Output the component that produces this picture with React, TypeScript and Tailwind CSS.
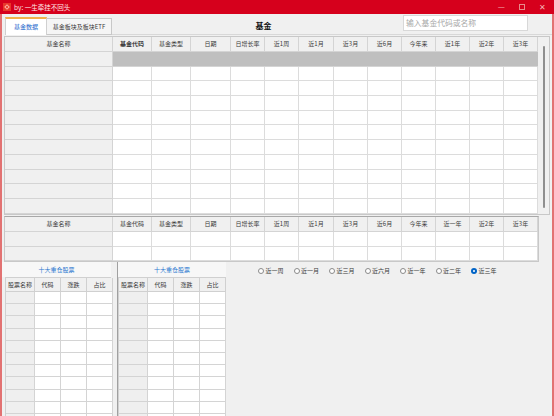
import React from "react";

const mainCols =
  "grid grid-cols-[108px_39px_39px_40px_34px_34px_35px_34px_34px_34px_34px_34px_34px]";
const stockCols = "grid grid-cols-[29px_26px_26px_26px]";

const mainHead = ["基金名称", "基金代码", "基金类型", "日期", "日增长率", "近1周", "近1月", "近3月", "近6月", "今年来", "近1年", "近2年", "近3年"];
const subHead = ["基金名称", "基金代码", "基金类型", "日期", "日增长率", "近1周", "近1月", "近3月", "近6月", "今年来", "近一年", "近2年", "近3年"];
const stockHead = ["股票名称", "代码", "涨跌", "占比"];
const periods = ["近一周", "近一月", "近三月", "近六月", "近一年", "近二年", "近三年"];

const HeadRow = ({ labels, bold }: { labels: string[]; bold?: boolean }) => (
  <div className={`${mainCols} h-[15px]`}>
    {labels.map((l, i) => (
      <div
        key={l + i}
        className={`flex items-center justify-center border-r border-b border-[#d4d4d4] bg-[#f0f0f0] text-[#3a3a3a] ${
          bold && i === 1 ? "font-bold" : ""
        }`}
      >
        {l}
      </div>
    ))}
  </div>
);

const DataRow = ({ selected, h }: { selected?: boolean; h: string }) => (
  <div className={`${mainCols} ${h}`}>
    <div className="border-r border-b border-[#d4d4d4] bg-[#f0f0f0]" />
    {Array.from({ length: 12 }).map((_, i) =>
      selected ? (
        <div key={i} className="border-b border-[#d4d4d4] bg-[#bfbfbf]" />
      ) : (
        <div key={i} className="border-r border-b border-[#dcdcdc] bg-white" />
      )
    )}
  </div>
);

const StockPanel = ({ dark }: { dark?: boolean }) => (
  <div className={`flex w-[109px] flex-col ${dark ? "border-l border-[#a0a0a0]" : ""}`}>
    <div className="flex h-[15px] items-center justify-center bg-[#f7f7f7] text-[#2b78d0]">
      十大重仓股票
    </div>
    <div className={`${dark ? "" : "ml-[3px]"} border-l border-t border-[#d0d0d0]`}>
      <div className={`${stockCols} h-[14px]`}>
        {stockHead.map((l) => (
          <div key={l} className="flex items-center justify-center border-r border-b border-[#d0d0d0] bg-[#f0f0f0] text-[#3a3a3a]">
            {l}
          </div>
        ))}
      </div>
      {Array.from({ length: 11 }).map((_, r) => (
        <div key={r} className={`${stockCols} h-[12.2px]`}>
          <div className="border-r border-b border-[#d4d4d4] bg-[#efefef]" />
          <div className="border-r border-b border-[#d4d4d4] bg-white" />
          <div className="border-r border-b border-[#d4d4d4] bg-white" />
          <div className="border-r border-b border-[#d4d4d4] bg-white" />
        </div>
      ))}
    </div>
  </div>
);

export default function App() {
  return (
    <div className="flex h-[416px] w-[554px] flex-col overflow-hidden bg-[#f0f0f0] font-['Noto_Sans_CJK_SC',sans-serif] text-[6px] leading-none">
      {/* title bar */}
      <div className="flex h-[14px] shrink-0 items-center bg-[#d6001c] text-white">
        <div className="ml-[3px] flex h-[8px] w-[8px] items-center justify-center bg-[#e8382c]">
          <div className="h-[4px] w-[4px] rotate-45 border border-[#ffb3a0]" />
        </div>
        <span className="ml-[3px] text-[6.5px] text-[#ffe6e6]">by: 一生牵挂不回头</span>
        <div className="ml-auto flex items-center gap-[14px] pr-[8px] text-[8px] text-[#f4b4b4]">
          <span>—</span>
          <span className="block h-[6px] w-[6px] border border-[#e88a8a]" />
          <span>✕</span>
        </div>
      </div>

      <div className="flex flex-1 flex-col border-x-2 border-b border-[#e27272]">
        {/* tabs row */}
        <div className="flex h-[21px] shrink-0 items-end pl-[3px]">
          <div className="flex h-[18px] w-[42px] items-center justify-center border-x border-t-2 border-[#d0d0d0] border-t-[#f2b04a] bg-white text-[#1a66cc]">
            基金数据
          </div>
          <div className="flex h-[17px] w-[65px] items-center justify-center border-r border-t border-b border-[#c8c8c8] bg-[#f5f5f5] text-[#3a3a3a]">
            基金板块及板块ETF
          </div>
          <div className="flex h-full flex-1 items-center justify-center border-b border-[#d8d8d8] pl-[12px] pt-[3px] text-[8px] font-bold text-[#111]">
            基金
          </div>
          <div className="flex h-full items-start border-b border-[#d8d8d8] pr-[24px] pt-[1px]">
            <div className="flex h-[16px] w-[125px] items-center border border-[#d8d8d8] bg-white pl-[2px] text-[7.8px] text-[#a8a8a8]">
              输入基金代码或名称
            </div>
          </div>
        </div>

        {/* main table */}
        <div className="ml-[2px] mt-[1px] flex h-[179px] w-[546px] border border-[#c8c8c8] bg-[#f0f0f0]">
          <div className="flex flex-col">
            <HeadRow labels={mainHead} bold />
            <DataRow selected h="h-[14.7px]" />
            {Array.from({ length: 10 }).map((_, i) => (
              <DataRow key={i} h="h-[14.7px]" />
            ))}
          </div>
          <div className="flex flex-1 justify-center pt-[9px] pb-[6px]">
            <div className="w-[2px] rounded-full bg-[#8f8f8f]" />
          </div>
        </div>

        {/* second table */}
        <div className="ml-[2px] mt-[1px] flex w-[535px] flex-col border border-[#c8c8c8] border-t-[#a8a8a8]">
          <HeadRow labels={subHead} />
          <DataRow h="h-[15px]" />
          <DataRow h="h-[14px]" />
        </div>

        {/* bottom */}
        <div className="flex flex-1 gap-[6px] overflow-hidden">
          <StockPanel />
          <StockPanel dark />
          <div className="flex h-[15px] items-center gap-[10px] pl-[26px] pt-[2px] text-[#3a3a3a]">
            {periods.map((p, i) => (
              <div key={p} className="flex items-center gap-[1.5px]">
                {i === periods.length - 1 ? (
                  <span className="flex h-[6px] w-[6px] items-center justify-center rounded-full bg-[#0063c6]">
                    <span className="h-[2px] w-[2px] rounded-full bg-white" />
                  </span>
                ) : (
                  <span className="h-[6px] w-[6px] rounded-full border-[0.7px] border-[#8a8a8a] bg-white" />
                )}
                <span>{p}</span>
              </div>
            ))}
          </div>
        </div>
      </div>
    </div>
  );
}
